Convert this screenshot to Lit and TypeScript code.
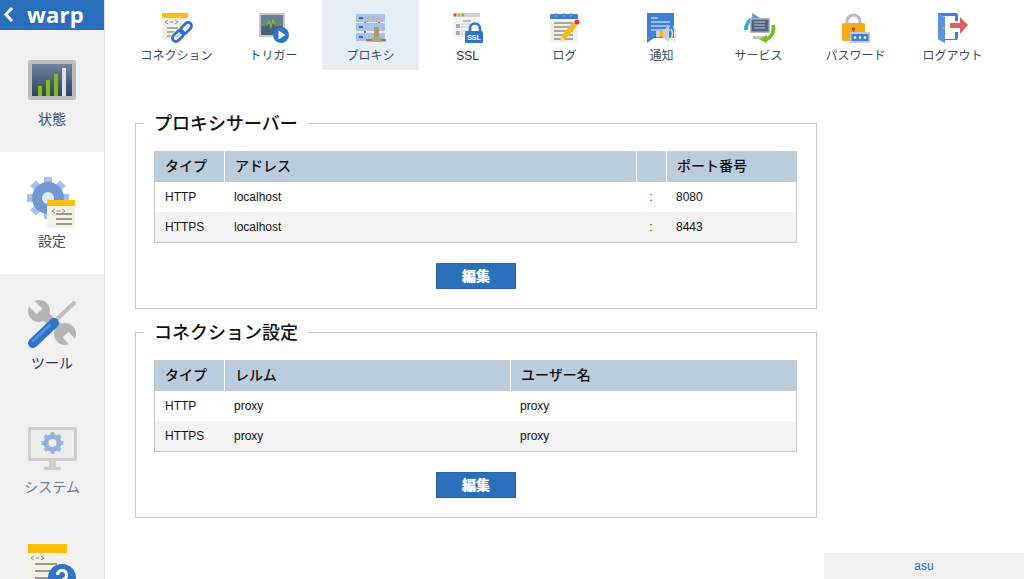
import { LitElement, html, css, svg } from "lit";
import { customElement } from "lit/decorators.js";

const gearTeeth = (cx: number, cy: number, r: number, w: number, h: number, fill: string) =>
  [0, 45, 90, 135, 180, 225, 270, 315].map(
    (a) => svg`<rect x=${cx - w / 2} y=${cy - r - h} width=${w} height=${h + 2} fill=${fill} transform="rotate(${a} ${cx} ${cy})"/>`
  );

const docLines = (x: number, ys: number[], w: number, c = "#9a9a94", sw = 1.6) =>
  ys.map((y) => svg`<line x1=${x} y1=${y} x2=${x + w} y2=${y} stroke=${c} stroke-width=${sw}/>`);

const codeMark = (x: number, y: number, s = 1) => svg`
  <path d="M${x + 3 * s} ${y - 2 * s}L${x} ${y}L${x + 3 * s} ${y + 2 * s}M${x + 10 * s} ${y - 2 * s}L${x + 13 * s} ${y}L${x + 10 * s} ${y + 2 * s}M${x + 4.5 * s} ${y}H${x + 8.5 * s}" fill="none" stroke="#8d8d88" stroke-width="1"/>`;

const topIcons: Record<string, unknown> = {
  connection: svg`
    <rect x="1" y="1" width="26" height="27" fill="#f1f1e4"/>
    <rect x="1" y="1" width="26" height="5" fill="#fdbd0a"/>
    ${codeMark(4, 10)}
    ${docLines(6, [16, 20, 24], 11)}
    <g fill="none" stroke="#2f74c6" stroke-width="2.8" transform="rotate(-45 21 20)">
      <rect x="9" y="16.500" width="13" height="7" rx="3.500" stroke="#fff" stroke-width="4.500"/>
      <rect x="20" y="16.500" width="13" height="7" rx="3.500" stroke="#fff" stroke-width="4.500"/>
      <rect x="9" y="16.500" width="13" height="7" rx="3.500"/>
      <rect x="20" y="16.500" width="13" height="7" rx="3.500"/>
    </g>`,
  trigger: svg`
    <rect x="1" y="1" width="26" height="24" rx="1" fill="#c6c6c6"/>
    <rect x="3" y="3" width="22" height="20" fill="#49607f"/>
    <rect x="3" y="3" width="22" height="9" fill="#6b7f99"/>
    <path d="M3 13H9L11 9L13 15L15 8L17 13H25" fill="none" stroke="#7fc31c" stroke-width="1.2"/>
    <circle cx="23" cy="23" r="8" fill="#2f74c6"/>
    <path d="M20.500 18.500L27.500 23L20.500 27.500Z" fill="#fff"/>`,
  proxy: svg`
    <rect x="1" y="2" width="29" height="8" fill="#a9c2e8"/>
    <rect x="1" y="11" width="29" height="8" fill="#a9c2e8"/>
    <rect x="1" y="21" width="29" height="8" fill="#a9c2e8"/>
    <rect x="4" y="5" width="4" height="2" fill="#2f6fbe"/>
    <rect x="4" y="14" width="4" height="2" fill="#2f6fbe"/>
    <rect x="4" y="24" width="4" height="2" fill="#2f6fbe"/>
    <rect x="12" y="5" width="2" height="2" fill="#f0b040"/>
    <rect x="17" y="5" width="2" height="2" fill="#f0b040"/>
    <rect x="22" y="5" width="2" height="2" fill="#f0b040"/>
    <rect x="9" y="10" width="2" height="1" fill="#777"/><rect x="23" y="10" width="2" height="1" fill="#777"/>
    <rect x="9" y="19" width="2" height="2" fill="#777"/>
    <rect x="19" y="15" width="5" height="14" rx="1" fill="#a89a70"/>
    <rect x="11" y="27" width="20" height="2.400" fill="#8d8058"/>
    <rect x="17" y="25" width="9" height="5" rx="1" fill="#b3a57c"/>`,
  ssl: svg`
    <rect x="1" y="1" width="27" height="24" fill="#f3f3f3"/>
    <rect x="1" y="1" width="27" height="4" fill="#d0d0d0"/>
    <circle cx="3" cy="3" r="1.400" fill="#dd4040"/><circle cx="7" cy="3" r="1.400" fill="#f0a020"/><circle cx="11" cy="3" r="1.400" fill="#7fbb30"/>
    <rect x="11" y="8" width="8" height="2" fill="#bbb"/>
    <rect x="4" y="12" width="4" height="4" fill="#aaa"/><rect x="4" y="19" width="4" height="4" fill="#aaa"/>
    <rect x="10" y="12" width="8" height="3" fill="none" stroke="#ccc"/><rect x="10" y="19" width="8" height="3" fill="none" stroke="#ccc"/>
    <path d="M18 20V16.500A5 5 0 0 1 28 16.500V20" fill="none" stroke="#2f74c6" stroke-width="2.600"/>
    <rect x="13" y="19" width="18" height="12" rx="1.500" fill="#2f74c6"/>
    <text x="22" y="28.300" text-anchor="middle" font-size="7" font-weight="700" fill="#fff" font-family="Liberation Sans, sans-serif">SSL</text>`,
  log: svg`
    <rect x="1" y="2" width="28" height="28" fill="#f1f1e4"/>
    <rect x="1" y="2" width="28" height="5" rx="1" fill="#3f7fcf"/>
    <rect x="6" y="1" width="1.500" height="4" fill="#999"/><rect x="14" y="1" width="1.500" height="4" fill="#999"/><rect x="21" y="1" width="1.500" height="4" fill="#999"/>
    ${docLines(5, [11, 15, 19, 23, 27], 19, "#8f8f88", 1.5)}
    <path d="M26 12L14 26" stroke="#f5b91a" stroke-width="5"/>
    <path d="M12.200 24.500L15.800 27.500L11 30Z" fill="#f4dca0"/>
    <circle cx="28" cy="10" r="2.600" fill="#d83c3c"/>`,
  notify: svg`
    <path d="M1 1H28V26H8L1 31Z" fill="#3f80d2"/>
    ${docLines(5, [6], 7, "#dbe8f8", 1.2)}${docLines(5, [10, 14, 18], 19, "#dbe8f8", 1.2)}
    <path d="M10 19H16L23 14V30L16 25H10Z" fill="#cfcfcf"/>
    <rect x="14" y="19" width="3" height="6" fill="#f5b91a"/>
    <path d="M25 17Q28 22 25 27M27.500 14Q32 22 27.500 30" fill="none" stroke="#ddd" stroke-width="1.500"/>`,
  service: svg`
    <path d="M3 18A11 11 0 0 1 12 6" fill="none" stroke="#3aa0ee" stroke-width="3.600"/>
    <path d="M9 1L17 6L10 11Z" fill="#3aa0ee"/>
    <rect x="7" y="6" width="20" height="15" rx="1" fill="#b9bcc0"/>
    <rect x="8.500" y="7.500" width="17" height="12" fill="#4d6483"/>
    ${docLines(11, [10, 13, 16], 11, "#b8c4d4", 1)}
    <rect x="10" y="24" width="14" height="3" fill="#c6c6c6"/>
    <path d="M30 13A12 12 0 0 1 22 28" fill="none" stroke="#7fbb22" stroke-width="3.600"/>
    <path d="M24 23L16 27.500L24 31Z" fill="#7fbb22"/>`,
  password: svg`
    <path d="M7 14V9.500A6.500 6.500 0 0 1 20 9.500V14" fill="none" stroke="#b9b9b9" stroke-width="3"/>
    <rect x="2" y="11" width="23" height="18" rx="2" fill="#f9a818"/>
    <circle cx="13.500" cy="17" r="1.800" fill="#8b5e10"/><rect x="12.800" y="17" width="1.400" height="4" fill="#8b5e10"/>
    <rect x="10" y="20" width="20" height="11" rx="1" fill="#c8c8c8"/>
    <rect x="11.500" y="22" width="17" height="7" fill="#3f7fcf"/>
    <circle cx="15" cy="25.500" r="1.300" fill="#fff"/><circle cx="20" cy="25.500" r="1.300" fill="#fff"/><circle cx="25" cy="25.500" r="1.300" fill="#fff"/>`,
  logout: svg`
    <path d="M1 2Q1 1 2 1H19Q21 1 21 3V9H18V4H6V27H18V20H21V26Q21 28 19 28H8V31L1 27Z" fill="#3f80d2"/>
    <path d="M1 2L8 5V31L1 27Z" fill="#5a93dc"/>
    <rect x="9" y="5" width="9" height="22" fill="#fff"/>
    <rect x="5.500" y="15" width="2" height="2" fill="#f0a020"/>
    <path d="M13 11H23V5L31 13L23 22V16H13Z" fill="#dd6060"/>`,
};

const sideIcons: Record<string, unknown> = {
  status: svg`
    <defs><linearGradient id="sg" x1="0" y1="0" x2="0" y2="1"><stop offset="0" stop-color="#6f82a0"/><stop offset="1" stop-color="#2f4262"/></linearGradient></defs>
    <rect x="0" y="4" width="48" height="40" rx="2" fill="#bcbcbc"/>
    <rect x="4" y="8" width="40" height="32" fill="url(#sg)"/>
    <rect x="10" y="30" width="4" height="10" fill="#85bd0c"/>
    <rect x="18" y="24" width="4" height="16" fill="#85bd0c"/>
    <rect x="26" y="18" width="4" height="22" fill="#85bd0c"/>
    <rect x="34" y="12" width="4" height="28" fill="#e0e0e0"/>`,
  settings: svg`
    ${gearTeeth(20, 20, 15, 8, 6, "#a4c0ea")}
    <circle cx="20" cy="20" r="16" fill="#6f98d2"/>
    <circle cx="20" cy="20" r="6" fill="#dfe8f6"/>
    <rect x="19" y="22" width="28" height="28" fill="#f2f2e6"/>
    <rect x="19" y="22" width="28" height="6" fill="#fdbd0a"/>
    ${codeMark(24, 33)}
    ${docLines(28, [36, 41, 46], 16, "#99998f", 2)}`,
  tools: svg`
    <path d="M10 10L38 34" stroke="#b4b4b4" stroke-width="9"/>
    <circle cx="11" cy="11" r="11" fill="#b4b4b4"/>
    <circle cx="37" cy="34" r="11" fill="#b4b4b4"/>
    <path d="M11.500 11.500L0 0" stroke="#f0f0f0" stroke-width="8"/>
    <path d="M37.500 34.500L49 47" stroke="#f0f0f0" stroke-width="8"/>
    <path d="M28 20L46 3" stroke="#bdbdbd" stroke-width="4" stroke-linecap="round"/>
    <path d="M5 43L26 23" stroke="#2f74c6" stroke-width="10" stroke-linecap="round"/>
    <path d="M5 41L22 25" stroke="#5a98e0" stroke-width="2" stroke-linecap="round"/>`,
  system: svg`
    <rect x="0" y="5" width="49" height="34" rx="1" fill="#c0c0c0"/>
    <rect x="3" y="8" width="43" height="28" fill="#ececec"/>
    <rect x="21" y="39" width="7" height="6" fill="#c0c0c0"/>
    <rect x="16" y="45" width="17" height="3" fill="#c0c0c0"/>
    ${gearTeeth(24.5, 21, 8, 4, 3, "#7fa4d8")}
    <circle cx="24.500" cy="21" r="9" fill="#6f98d2"/>
    <circle cx="24.500" cy="21" r="4" fill="#ececec"/>`,
  help: svg`
    <rect x="0" y="0" width="39" height="48" fill="#f1f1e4"/>
    <rect x="0" y="0" width="39" height="9" fill="#fdbd0a"/>
    ${codeMark(3, 14)}
    ${docLines(7, [20, 27, 34, 41], 22, "#99998f", 2)}
    <circle cx="34" cy="34" r="14" fill="#2f74c6"/>
    <path d="M29.500 31A4.500 4.500 0 1 1 36 35L34 37V40" fill="none" stroke="#fff" stroke-width="3"/>`,
};

const topItems = [
  ["connection", "コネクション"],
  ["trigger", "トリガー"],
  ["proxy", "プロキシ"],
  ["ssl", "SSL"],
  ["log", "ログ"],
  ["notify", "通知"],
  ["service", "サービス"],
  ["password", "パスワード"],
  ["logout", "ログアウト"],
];

const sideItems = [
  ["status", "状態"],
  ["settings", "設定"],
  ["tools", "ツール"],
  ["system", "システム"],
  ["help", ""],
];

@customElement("app-root")
export class AppRoot extends LitElement {
  static styles = css`
    :host {
      display: block;
      position: relative;
      height: 579px;
      overflow: hidden;
      background: #fff;
      font-family: "Liberation Sans", "Noto Sans CJK JP", sans-serif;
      color: #111;
    }
    .shell { display: grid; grid-template-columns: 105px 1fr; height: 579px; }
    .side { background: #f0f0f0; border-right: 1px solid #e0e0e0; box-sizing: border-box; overflow: hidden; }
    .brand {
      height: 30px; box-sizing: border-box; background: #2a6fbb; color: #fff;
      display: flex; align-items: flex-start; padding-left: 3px; gap: 13px;
    }
    .brand svg { margin-top: 7px; flex: none; }
    .brand span {
      font-family: "Open Sans", sans-serif; font-weight: 700; font-size: 22px;
      line-height: 24px; letter-spacing: 0.2px; margin-top: 2px;
    }
    .s-item { height: 122px; box-sizing: border-box; padding-top: 26px; display: flex; flex-direction: column; align-items: center; }
    .s-item svg { display: block; flex: none; overflow: visible; }
    .s-item span { margin-top: 6px; font-size: 14px; line-height: 18px; color: #3b4a66; }
    .s-item.on { background: #fff; }
    .s-item.tools span { color: #1f3560; }
    .s-item.system svg, .s-item.system span { opacity: 0.72; }
    .s-item.system span { margin-top: 8px; }
    .nav { display: flex; padding-left: 23px; height: 70px; }
    .n-item { width: 97px; height: 70px; box-sizing: border-box; padding-top: 12px; display: flex; flex-direction: column; align-items: center; }
    .n-item svg { display: block; flex: none; overflow: visible; }
    .n-item span { margin-top: 4px; font-size: 12px; line-height: 16px; color: #3b4a5e; }
    .n-item.on { background: #e6edf4; }
    .n-item.ssl span { color: #1c2b4c; }
    .content { padding: 43px 0 0 30px; }
    fieldset {
      margin: 0 0 13px; width: 682px; box-sizing: border-box;
      border: 1px solid #c8c8c8; padding: 18px 19px 19px 18px; min-width: 0;
    }
    legend {
      margin-left: -10px; padding: 2px 10px 0; font-size: 18px; line-height: 18px;
      font-weight: 500; color: #111;
    }
    table { width: 643px; border-collapse: separate; border-spacing: 0; table-layout: fixed; }
    th {
      background: #bbcddd; height: 31px; box-sizing: border-box; padding: 0 0 3px 10px;
      text-align: left; font-size: 14px; font-weight: 500; border-left: 1px solid #fff; color: #111;
    }
    th:first-child { border-left: 0; padding-left: 11px; }
    td { height: 30px; box-sizing: border-box; padding: 0 0 0 10px; font-size: 12px; color: #111; }
    td:first-child { border-left: 1px solid #c8c8c8; }
    td:last-child { border-right: 1px solid #c8c8c8; }
    td.colon { padding: 0; text-align: center; color: #4a4020; }
    tr.alt td { background: #f3f3f3; border-bottom: 1px solid #c8c8c8; height: 31px; }
    .actions { display: flex; justify-content: center; margin-top: 20px; padding-left: 1px; }
    button {
      width: 80px; height: 26px; box-sizing: border-box; background: #2a70bb;
      border: 1px solid #2566ae; color: #fff; font: inherit; font-size: 14px; font-weight: 700; padding: 0 0 2px;
      text-shadow: 0 0 1px #fff;
    }
    .user {
      position: absolute; right: 0; bottom: 0; width: 200px; height: 26px; background: #f0f0f0;
      display: flex; align-items: center; justify-content: center; font-size: 12px; color: #2a62b8;
    }
  `;

  private sideIcon(k: string) {
    return html`<svg width="48" height="48" viewBox="0 0 48 48">${sideIcons[k]}</svg>`;
  }

  private topIcon(k: string) {
    return html`<svg width="32" height="32" viewBox="0 0 32 32">${topIcons[k]}</svg>`;
  }

  private section(title: string, widths: number[], heads: string[], rows: string[][]) {
    return html`<fieldset>
      <legend>${title}</legend>
      <table>
        <colgroup>${widths.map((w) => html`<col style="width:${w}px" />`)}</colgroup>
        <thead><tr>${heads.map((h) => html`<th>${h}</th>`)}</tr></thead>
        <tbody>
          ${rows.map(
            (r, i) => html`<tr class=${i === 1 ? "alt" : ""}>
              ${r.map((c) => html`<td class=${c === ":" ? "colon" : ""}>${c}</td>`)}
            </tr>`
          )}
        </tbody>
      </table>
      <div class="actions"><button>編集</button></div>
    </fieldset>`;
  }

  render() {
    return html`<div class="shell">
        <aside class="side">
          <div class="brand">
            <svg width="11" height="15" viewBox="0 0 11 15"><path d="M9 1L3 7.500L9 14" fill="none" stroke="#fff" stroke-width="3"/></svg>
            <span>warp</span>
          </div>
          ${sideItems.map(
            ([k, l]) => html`<div class="s-item ${k} ${k === "settings" ? "on" : ""}">${this.sideIcon(k)}${l ? html`<span>${l}</span>` : ""}</div>`
          )}
        </aside>
        <main>
          <nav class="nav">
            ${topItems.map(
              ([k, l]) => html`<div class="n-item ${k} ${k === "proxy" ? "on" : ""}">${this.topIcon(k)}<span>${l}</span></div>`
            )}
          </nav>
          <div class="content">
            ${this.section("プロキシサーバー", [70, 412, 30, 131], ["タイプ", "アドレス", "", "ポート番号"], [
              ["HTTP", "localhost", ":", "8080"],
              ["HTTPS", "localhost", ":", "8443"],
            ])}
            ${this.section("コネクション設定", [70, 286, 287], ["タイプ", "レルム", "ユーザー名"], [
              ["HTTP", "proxy", "proxy"],
              ["HTTPS", "proxy", "proxy"],
            ])}
          </div>
        </main>
      </div>
      <div class="user">asu</div>`;
  }
}
